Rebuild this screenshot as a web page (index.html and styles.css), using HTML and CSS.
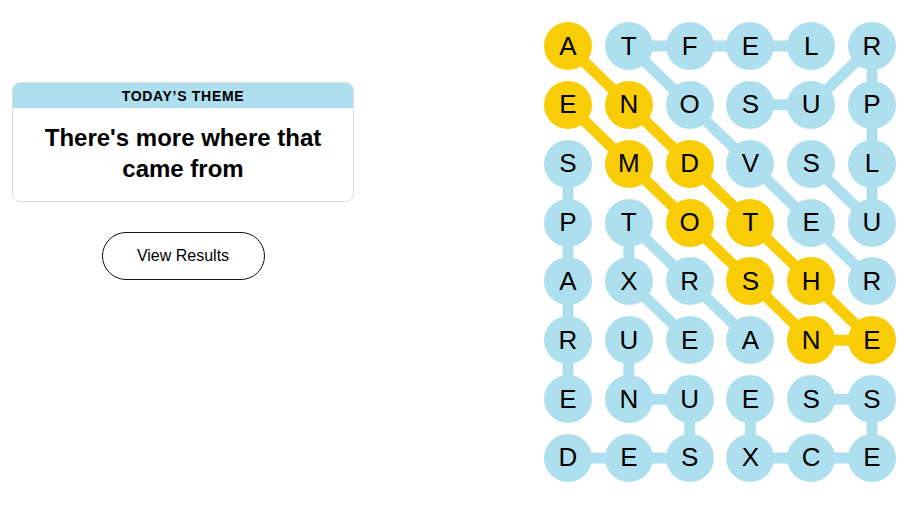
FILE: index.html
```html
<!DOCTYPE html>
<html lang="en">
<head>
  <meta charset="UTF-8" />
  <meta name="viewport" content="width=device-width, initial-scale=1.0" />
  <title>Strands</title>
  <link rel="stylesheet" href="styles.css">
</head>
<body>
  <main class="game">
    <!-- ============================
         Theme + results
         ============================ -->
    <section class="side">
      <div class="theme-card">
        <h2 class="theme-label">Today’s Theme</h2>
        <p class="theme-text">There's more where that came from</p>
      </div>
      <button class="results-btn">View Results</button>
    </section>

    <!-- ============================
         Letter board
         ============================ -->
    <section class="board">
      <svg class="paths" viewBox="0 0 352 461" aria-hidden="true">
        <g transform="translate(24 24) scale(60.8 58.857)">
          <polyline class="word" points="4,0 3,0 2,0 1,0 2,1 3,2 4,3 5,4" />
          <polyline class="word" points="3,1 4,1 5,0 5,1 5,2 5,3 4,2" />
          <polyline class="word" points="0,2 0,3 0,4 0,5 0,6" />
          <polyline class="word" points="2,5 1,4 1,3 2,4 3,5" />
          <polyline class="word" points="1,5 1,6 2,6 2,7 1,7 0,7" />
          <polyline class="word" points="3,6 3,7 4,7 5,7 5,6 4,6" />
          <polyline class="word spangram" points="0,0 1,1 2,2 3,3 4,4 5,5 4,5 3,4 2,3 1,2 0,1" />
        </g>
      </svg>

      <div class="grid">
        <span class="cell spangram">A</span><span class="cell">T</span><span class="cell">F</span><span class="cell">E</span><span class="cell">L</span><span class="cell">R</span>
        <span class="cell spangram">E</span><span class="cell spangram">N</span><span class="cell">O</span><span class="cell">S</span><span class="cell">U</span><span class="cell">P</span>
        <span class="cell">S</span><span class="cell spangram">M</span><span class="cell spangram">D</span><span class="cell">V</span><span class="cell">S</span><span class="cell">L</span>
        <span class="cell">P</span><span class="cell">T</span><span class="cell spangram">O</span><span class="cell spangram">T</span><span class="cell">E</span><span class="cell">U</span>
        <span class="cell">A</span><span class="cell">X</span><span class="cell">R</span><span class="cell spangram">S</span><span class="cell spangram">H</span><span class="cell">R</span>
        <span class="cell">R</span><span class="cell">U</span><span class="cell">E</span><span class="cell">A</span><span class="cell spangram">N</span><span class="cell spangram">E</span>
        <span class="cell">E</span><span class="cell">N</span><span class="cell">U</span><span class="cell">E</span><span class="cell">S</span><span class="cell">S</span>
        <span class="cell">D</span><span class="cell">E</span><span class="cell">S</span><span class="cell">X</span><span class="cell">C</span><span class="cell">E</span>
      </div>
    </section>
  </main>
</body>
</html>
```
FILE: styles.css
```css
/* ============================
   Basic Reset
   ============================ */
* {
  margin: 0;
  padding: 0;
  box-sizing: border-box;
}

body {
  background: #ffffff;
  color: #000000;
  font-family: "Liberation Sans", Arial, sans-serif;
}

.game {
  display: flex;
  justify-content: space-between;
  align-items: flex-start;
  padding: 22px 9px 0 12px;
}

/* ============================
   Theme Card
   ============================ */
.side {
  width: 342px;
  margin-top: 60px;
  display: flex;
  flex-direction: column;
  align-items: center;
  gap: 30px;
}

.theme-card {
  width: 100%;
  border: 1px solid #dcdcdc;
  border-radius: 8px;
  overflow: hidden;
  text-align: center;
}

.theme-label {
  background-color: #aedfee;
  height: 25px;
  line-height: 26px;
  font-size: 14px;
  font-weight: 700;
  letter-spacing: 0.7px;
  text-transform: uppercase;
}

.theme-text {
  padding: 14px 16px 17px;
  font-size: 24px;
  font-weight: 700;
  line-height: 31px;
}

.results-btn {
  width: 163px;
  height: 48px;
  border: 1px solid #121212;
  border-radius: 24px;
  background: #ffffff;
  color: #000000;
  font-family: inherit;
  font-size: 16px;
  cursor: pointer;
}

/* ============================
   Board
   ============================ */
.board {
  position: relative;
  width: 352px;
  height: 461px;
}

.paths {
  position: absolute;
  inset: 0;
  width: 100%;
  height: 100%;
}

.word {
  fill: none;
  stroke: #aedfee;
  stroke-width: 11;
  stroke-linejoin: round;
  vector-effect: non-scaling-stroke;
}

.word.spangram {
  stroke: #f8cd05;
}

.grid {
  position: relative;
  display: grid;
  grid-template-columns: repeat(6, 48px);
  grid-auto-rows: 48px;
  column-gap: 12.8px;
  row-gap: 10.857px;
}

.cell {
  display: flex;
  align-items: center;
  justify-content: center;
  border-radius: 50%;
  background-color: #aedfee;
  font-size: 26px;
  color: #000000;
}

.cell.spangram {
  background-color: #f8cd05;
}
```
